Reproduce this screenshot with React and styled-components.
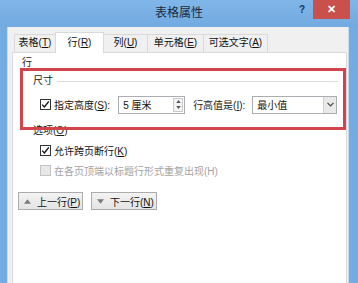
import React from 'react';
import styled, { createGlobalStyle } from 'styled-components';

const GlobalStyle = createGlobalStyle`
  html, body {
    margin: 0;
    padding: 0;
  }
  body {
    font-family: "Liberation Sans", "Noto Sans CJK SC", sans-serif;
    color: #1a1a1a;
  }
`;

const Window = styled.div`
  width: 358px;
  height: 283px;
  background: #74abe0;
  display: flex;
  flex-direction: column;
  overflow: hidden;
`;

const TitleBar = styled.div`
  height: 27px;
  flex-shrink: 0;
  display: grid;
  grid-template-columns: 62px 1fr 62px;
  background: linear-gradient(#80b6e8, #72a9df);
`;

const Title = styled.div`
  grid-column: 2;
  text-align: center;
  font-size: 12px;
  line-height: 26px;
  color: #1c2a3b;
`;

const Controls = styled.div`
  display: flex;
  justify-content: flex-end;
  align-items: flex-start;
  padding-right: 8px;
`;

const Help = styled.span`
  font-size: 10px;
  font-weight: bold;
  color: #17365d;
  margin: 5px 8px 0 0;
  line-height: 10px;
`;

const Close = styled.div`
  width: 37px;
  height: 19px;
  background: #c9504b;
  color: #fff;
  font-size: 11px;
  font-weight: bold;
  display: flex;
  align-items: center;
  justify-content: center;
`;

const Body = styled.div`
  flex: 1;
  margin: 0 9px 0 7px;
  background: #f0f0f0;
  border-left: 1px solid #c6dbf0;
  border-right: 1px solid #c6dbf0;
  padding: 5px 1px 0 4px;
  display: flex;
  flex-direction: column;
`;

const TabBar = styled.div`
  display: flex;
  align-items: flex-end;
  padding-left: 2px;
  margin-bottom: -1px;
  position: relative;
  z-index: 1;
`;

const Tab = styled.div`
  width: ${p => p.w}px;
  height: ${p => (p.active ? 21 : 18)}px;
  margin-bottom: ${p => (p.active ? 0 : 1)}px;
  margin-left: -1px;
  box-sizing: border-box;
  border: 1px solid #d9d9d9;
  border-bottom: none;
  background: ${p => (p.active ? '#fff' : '#f0f0f0')};
  font-size: 10px;
  line-height: ${p => (p.active ? 19 : 16)}px;
  text-align: center;
  color: #111;
  &:first-child {
    margin-left: 0;
  }
`;

const Panel = styled.div`
  flex: 1;
  position: relative;
  background: #fff;
  border: 1px solid #d9d9d9;
  border-bottom: none;
  padding: 3px 0 0 9px;
  display: flex;
  flex-direction: column;
`;

const Caption = styled.div`
  font-size: 10px;
  line-height: 14px;
  margin-top: ${p => p.mt || 0}px;
  padding-left: ${p => p.indent || 0}px;
  display: flex;
  align-items: center;
  gap: 4px;
`;

const Text = styled.span`
  white-space: nowrap;
`;

const Rule = styled.span`
  flex: 1;
  height: 1px;
  background: #dcdcdc;
  margin-right: 8px;
`;

const Row = styled.div`
  display: flex;
  align-items: center;
  height: 19px;
  margin-top: ${p => p.mt || 0}px;
  padding-left: 18px;
  font-size: 10px;
`;

const CheckRow = styled.div`
  display: flex;
  align-items: center;
  gap: 3px;
  height: 16px;
  margin-top: ${p => p.mt || 0}px;
  padding-left: ${p => (p.inline ? 0 : 18)}px;
  font-size: 10px;
  color: ${p => (p.disabled ? '#a3a3a3' : '#111')};
`;

const Box = styled.span`
  width: 11px;
  height: 11px;
  box-sizing: border-box;
  border: 1px solid ${p => (p.disabled ? '#c4c4c4' : '#333')};
  background: ${p => (p.disabled ? '#e8e8e8' : '#fff')};
  display: flex;
  align-items: center;
  justify-content: center;
  flex-shrink: 0;
`;

const Field = styled.div`
  width: ${p => p.w}px;
  height: 18px;
  box-sizing: border-box;
  border: 1px solid #abadb3;
  display: flex;
  align-items: center;
  justify-content: space-between;
  margin-left: ${p => p.ml || 0}px;
  padding-left: 4px;
  font-size: 10px;
  color: #111;
`;

const Spinner = styled.div`
  width: 10px;
  height: 14px;
  margin-right: 1px;
  border: 1px solid #c8c8c8;
  box-sizing: border-box;
  display: flex;
  flex-direction: column;
  align-items: center;
  justify-content: space-around;
  background: #f4f4f4;
`;

const DropButton = styled.div`
  width: 12px;
  height: 16px;
  background: #e9e9e9;
  border-left: 1px solid #d0d0d0;
  display: flex;
  align-items: center;
  justify-content: center;
`;

const Label = styled.span`
  margin-left: ${p => p.ml || 0}px;
  white-space: nowrap;
`;

const Buttons = styled.div`
  display: flex;
  gap: 8px;
  margin: 14px 0 0 -4px;
`;

const Button = styled.div`
  width: ${p => p.w}px;
  height: 18px;
  box-sizing: border-box;
  border: 1px solid #acacac;
  background: linear-gradient(#f3f3f3, #e4e4e4);
  display: flex;
  align-items: center;
  gap: 6px;
  padding-left: 5px;
  font-size: 10px;
  color: #111;
`;

const Highlight = styled.div`
  position: absolute;
  left: 7px;
  top: 15px;
  width: 326px;
  height: 62px;
  box-sizing: border-box;
  border: 3px solid #d3434a;
  pointer-events: none;
`;

const Check = () => (
  <svg width="9" height="9" viewBox="0 0 9 9">
    <path d="M1.2 4.6 L3.4 7 L7.8 1.4" fill="none" stroke="#111" strokeWidth="1.4" />
  </svg>
);

const Tri = ({ up, size = 5, color = '#6a6a6a' }) => (
  <svg width={size} height={size - 2} viewBox="0 0 6 4">
    <path d={up ? 'M0 4 L3 0 L6 4 Z' : 'M0 0 L3 4 L6 0 Z'} fill={color} />
  </svg>
);

const tabs = [
  { label: '表格', key: 'T', w: 42 },
  { label: '行', key: 'R', w: 49, active: true },
  { label: '列', key: 'U', w: 45 },
  { label: '单元格', key: 'E', w: 57 },
  { label: '可选文字', key: 'A', w: 65 },
];

export default function App() {
  return (
    <>
      <GlobalStyle />
      <Window>
        <TitleBar>
          <Title>表格属性</Title>
          <Controls>
            <Help>?</Help>
            <Close>✕</Close>
          </Controls>
        </TitleBar>
        <Body>
          <TabBar>
            {tabs.map(t => (
              <Tab key={t.key} w={t.w} active={t.active}>
                {t.label}(<u>{t.key}</u>)
              </Tab>
            ))}
          </TabBar>
          <Panel>
            <Caption><Text>行</Text></Caption>
            <Caption mt={4} indent={11}>
              <Text>尺寸</Text>
              <Rule />
            </Caption>
            <Row mt={7}>
              <CheckRow inline>
                <Box><Check /></Box>
                <Text>指定高度(<u>S</u>):</Text>
              </CheckRow>
              <Field w={67} ml={8}>
                <Text>5 厘米</Text>
                <Spinner>
                  <Tri up size={5} color="#555" />
                  <Tri size={5} color="#555" />
                </Spinner>
              </Field>
              <Label ml={8}>行高值是(<u>I</u>):</Label>
              <Field w={85} ml={7}>
                <Text>最小值</Text>
                <DropButton>
                  <svg width="7" height="5" viewBox="0 0 7 5">
                    <path d="M0.5 0.8 L3.5 3.8 L6.5 0.8" fill="none" stroke="#444" strokeWidth="1.2" />
                  </svg>
                </DropButton>
              </Field>
            </Row>
            <Caption mt={10} indent={11}><Text>选项(<u>O</u>)</Text></Caption>
            <CheckRow mt={4}>
              <Box><Check /></Box>
              <Text>允许跨页断行(<u>K</u>)</Text>
            </CheckRow>
            <CheckRow mt={4} disabled>
              <Box disabled />
              <Text>在各页顶端以标题行形式重复出现(H)</Text>
            </CheckRow>
            <Buttons>
              <Button w={65}>
                <Tri up size={7} color="#7a7a7a" />
                <Text>上一行(<u>P</u>)</Text>
              </Button>
              <Button w={66}>
                <Tri size={7} color="#7a7a7a" />
                <Text>下一行(<u>N</u>)</Text>
              </Button>
            </Buttons>
            <Highlight />
          </Panel>
        </Body>
      </Window>
    </>
  );
}
